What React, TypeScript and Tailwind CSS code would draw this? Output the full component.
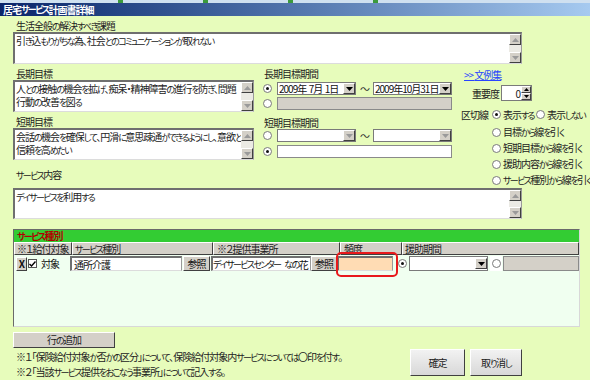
import React from "react";

const jp =
  "font-['Noto_Sans_CJK_JP','Noto_Sans_CJK_SC',sans-serif] [font-feature-settings:'palt'] tracking-[-1px]";

const raised =
  "border border-t-white border-l-white border-b-[#404040] border-r-[#404040] bg-[#d4d0c8]";
const sunken =
  "border-t-2 border-l-2 border-r border-b border-t-[#6f6f6f] border-l-[#6f6f6f] border-r-[#9a9a9a] border-b-[#dcdcdc]";

// kana in the old UI font are smaller and narrower than kanji
function T({ s }: { s: string }) {
  const parts = s.match(/[\u3041-\u30fa\u30fc]+|[^\u3041-\u30fa\u30fc]+/g) ?? [];
  return (
    <>
      {parts.map((p, i) =>
        /[\u3041-\u30fa\u30fc]/.test(p) ? (
          <span key={i} className="text-[9px] tracking-[-1.6px]">
            {p}
          </span>
        ) : (
          <span key={i}>{p}</span>
        )
      )}
    </>
  );
}

function Radio({ on = false }: { on?: boolean }) {
  return (
    <span className="flex h-[9px] w-[9px] shrink-0 items-center justify-center rounded-full border border-[#7a7a7a] bg-white">
      {on && <span className="h-[3px] w-[3px] rounded-full bg-[#111]" />}
    </span>
  );
}

function Arrow({ up = false, dim = false }: { up?: boolean; dim?: boolean }) {
  return (
    <svg width="7" height="4" viewBox="0 0 7 4">
      <path d={up ? "M0 4 L3.5 0 L7 4 Z" : "M0 0 L7 0 L3.5 4 Z"} fill={dim ? "#9a9a9a" : "#000"} />
    </svg>
  );
}

function ScrollBar() {
  return (
    <div className="flex w-[12px] shrink-0 flex-col bg-[#ebeae4]">
      <div className={`flex h-[11px] items-center justify-center ${raised}`}>
        <Arrow up dim />
      </div>
      <div className="flex-1" />
      <div className={`flex h-[11px] items-center justify-center ${raised}`}>
        <Arrow dim />
      </div>
    </div>
  );
}

function TextBox({ className, lines }: { className: string; lines: string[] }) {
  return (
    <div className={`flex bg-white ${sunken} ${className}`}>
      <div className="flex-1 overflow-hidden whitespace-nowrap pl-[1px] pt-[1px] text-[10px] leading-[12px] text-[#222]">
        {lines.map((l) => (
          <div key={l}>
            <T s={l} />
          </div>
        ))}
      </div>
      <ScrollBar />
    </div>
  );
}

function Combo({ text = "", className, dim = false }: { text?: string; className: string; dim?: boolean }) {
  return (
    <div className={`flex h-[13px] items-center border border-[#7a7a7a] bg-white ${className}`}>
      <span className="flex-1 overflow-hidden whitespace-pre pl-[1px] text-[10px] leading-[11px] text-[#111]">
        <T s={text} />
      </span>
      <span className={`flex h-[11px] w-[12px] shrink-0 items-center justify-center ${raised}`}>
        <Arrow dim={dim} />
      </span>
    </div>
  );
}

function Label({ s, className = "" }: { s: string; className?: string }) {
  return (
    <div className={`h-[12px] text-[10px] leading-[12px] text-[#222] ${className}`}>
      <T s={s} />
    </div>
  );
}

export default function App() {
  return (
    <div className={`flex h-[380px] w-[590px] flex-col overflow-hidden bg-[#dbe8f5] ${jp}`}>
      {/* other window peeking at top */}
      <div className="flex h-[3px] gap-[80px] bg-[#cfe0f0] pl-[118px]">
        <span className="w-[5px] bg-[#3c9a3c]" />
        <span className="w-[5px] bg-[#3c9a3c]" />
        <span className="w-[5px] bg-[#3c9a3c]" />
        <span className="w-[5px] bg-[#3c9a3c]" />
      </div>

      {/* title bar */}
      <div className="flex h-[13px] items-center bg-gradient-to-r from-[#0a246a] to-[#a6caf0] pl-[3px] text-[10px] font-bold leading-[13px] text-white">
        <T s="居宅サービス計画書詳細" />
      </div>

      {/* body */}
      <div className="flex flex-1 flex-col bg-[#e7fcbb] pl-[13px]">
        <Label className="mt-[4px] pl-[3px]" s="生活全般の解決すべき課題" />
        <TextBox className="h-[32px] w-[509px]" lines={["引き込もりがちな為、社会とのコミュニケーションが取れない"]} />

        <div className="mt-[3px] flex">
          {/* left column */}
          <div className="flex w-[241px] flex-col">
            <Label className="h-[13px] pl-[3px] leading-[13px]" s="長期目標" />
            <TextBox
              className="h-[32px] w-[241px]"
              lines={["人との接触の機会を拡げ、痴呆・精神障害の進行を防ぎ、問題", "行動の改善を図る"]}
            />
            <Label className="mt-[4px] pl-[3px]" s="短期目標" />
            <TextBox
              className="h-[32px] w-[241px]"
              lines={["会話の機会を確保して、円滑に意思疎通ができるようにし、意欲と", "信頼を高めたい"]}
            />
            <Label className="mt-[9px] pl-[3px]" s="サービス内容" />
          </div>

          {/* period column */}
          <div className="ml-[9px] flex w-[190px] flex-col">
            <Label className="h-[13px] pl-[1px] leading-[13px]" s="長期目標期間" />
            <div className="mt-[2px] flex h-[13px] items-center">
              <Radio on />
              <Combo className="ml-[5px] w-[79px]" text="2009年  7月  1日" />
              <span className="w-[17px] text-center text-[10px] text-[#333]">～</span>
              <Combo className="w-[79px]" text="2009年10月31日" />
            </div>
            <div className="mt-[2px] flex h-[13px] items-center">
              <Radio />
              <div className="ml-[5px] h-[13px] w-[175px] border border-[#8a8a8a] bg-[#d4d0c8]" />
            </div>
            <Label className="mt-[6px] h-[13px] pl-[1px] leading-[13px]" s="短期目標期間" />
            <div className="flex h-[13px] items-center">
              <Radio />
              <Combo className="ml-[5px] w-[79px]" dim />
              <span className="w-[17px] text-center text-[10px] text-[#333]">～</span>
              <Combo className="w-[79px]" dim />
            </div>
            <div className="mt-[3px] flex h-[13px] items-center">
              <Radio on />
              <div className="ml-[5px] h-[13px] w-[175px] border border-[#8a8a8a] bg-white" />
            </div>
          </div>

          {/* options column */}
          <div className="ml-[9px] flex flex-col text-[10px] text-[#222]">
            <div className="mt-[2px] h-[12px] pl-[3px] leading-[12px] text-[#2a45ff] underline">
              &gt;&gt; <T s="文例集" />
            </div>
            <div className="mt-[4px] flex h-[16px] items-center pl-[11px]">
              <span className="w-[29px]">重要度</span>
              <div className="flex h-[16px] w-[31px] items-center border border-[#7a7a7a] bg-white">
                <span className="flex-1 pr-[1px] text-right leading-[11px]">0</span>
                <div className="flex flex-col">
                  <span className={`flex h-[7px] w-[10px] items-center justify-center ${raised}`}>
                    <svg width="5" height="3" viewBox="0 0 5 3"><path d="M0 3 L2.5 0 L5 3 Z" fill="#000" /></svg>
                  </span>
                  <span className={`flex h-[7px] w-[10px] items-center justify-center ${raised}`}>
                    <svg width="5" height="3" viewBox="0 0 5 3"><path d="M0 0 L5 0 L2.5 3 Z" fill="#000" /></svg>
                  </span>
                </div>
              </div>
            </div>
            <div className="mt-[7px] flex h-[13px] items-center whitespace-nowrap">
              <span className="w-[31px]">区切線</span>
              <Radio on />
              <span className="ml-[2px] w-[33px]"><T s="表示する" /></span>
              <Radio />
              <span className="ml-[2px]"><T s="表示しない" /></span>
            </div>
            {["目標から線を引く", "短期目標から線を引く", "援助内容から線を引く", "サービス種別から線を引く"].map((t, i) => (
              <div key={t} className={`flex h-[16px] items-center whitespace-nowrap pl-[31px] ${i === 0 ? "mt-[3px]" : ""}`}>
                <Radio />
                <span className="ml-[2px]"><T s={t} /></span>
              </div>
            ))}
          </div>
        </div>

        <TextBox className="h-[31px] w-[509px]" lines={["デイサービスを利用する"]} />

        {/* service type frame */}
        <div className="relative mt-[10px] flex h-[98px] w-[567px] flex-col border border-[#6a6a6a] border-r-[#d8d8d8] border-b-[#d8d8d8] bg-[#f0fff0]">
          <div className="h-[12px] bg-[#33cc33] pl-[3px] text-[10px] font-bold leading-[12px] text-[#b00000]">
            <T s="サービス種別" />
          </div>
          <div className="flex h-[13px] bg-[#d4d0c8] text-[10px] leading-[11px] text-[#222]">
            <div className={`w-[58px] pl-[2px] ${raised}`}><T s="※１給付対象" /></div>
            <div className={`w-[141px] pl-[2px] ${raised}`}><T s="サービス種別" /></div>
            <div className={`w-[127px] pl-[3px] ${raised}`}><T s="※２提供事業所" /></div>
            <div className={`w-[62px] pl-[3px] ${raised}`}>頻度</div>
            <div className={`flex-1 pl-[2px] ${raised}`}>援助期間</div>
          </div>
          <div className="mt-[1px] flex h-[15px] items-center text-[10px] leading-[11px] text-[#111]">
            <span className={`ml-[2px] flex h-[14px] w-[11px] items-center justify-center font-bold ${raised}`}>X</span>
            <span className="ml-[1px] flex h-[9px] w-[9px] items-center justify-center border border-[#555] bg-white">
              <svg width="7" height="6" viewBox="0 0 7 6"><path d="M0.5 3 L2.5 5 L6.5 0.5" stroke="#000" strokeWidth="1.4" fill="none" /></svg>
            </span>
            <span className="ml-[4px] w-[29px]">対象</span>
            <span className={`flex h-[15px] w-[112px] items-center bg-white pl-[2px] ${sunken}`}>通所介護</span>
            <span className={`ml-[1px] flex h-[15px] w-[27px] items-center justify-center ${raised}`}>参照</span>
            <span className={`ml-[1px] flex h-[15px] w-[100px] items-center overflow-hidden whitespace-pre bg-white ${sunken}`}>
              <T s={"デイサービスセンター\u2002なの花"} />
            </span>
            <span className={`flex h-[15px] w-[26px] items-center justify-center ${raised}`}>参照</span>
            <span className={`flex h-[15px] w-[56px] bg-[#ffdcb4] ${sunken}`} />
            <span className="ml-[5px]"><Radio on /></span>
            <Combo className="ml-[2px] h-[15px] w-[79px]" />
            <span className="ml-[2px] flex h-[15px] w-[12px] items-center justify-center bg-white"><Radio /></span>
            <span className="ml-[1px] h-[15px] w-[76px] border border-[#8a8a8a] bg-[#d4d0c8]" />
          </div>
          {/* red highlight annotation */}
          <div className="absolute left-[322px] top-[22px] h-[25px] w-[62px] rounded-[5px] border-2 border-[#e8191c]" />
        </div>

        <button className={`mt-[5px] h-[16px] w-[102px] text-[10px] leading-[12px] text-[#222] ${raised}`}>
          <T s="行の追加" />
        </button>

        <div className="flex">
          <div className="w-[397px] whitespace-nowrap pl-[3px] pt-[2px] text-[10px] leading-[14px] text-[#222]">
            <div><T s="※１「保険給付対象か否かの区分」について、保険給付対象内サービスについては〇印を付す。" /></div>
            <div><T s="※２「当該サービス提供をおこなう事業所」について記入する。" /></div>
          </div>
          <button className="mt-[1px] h-[27px] w-[55px] border border-t-white border-l-white border-b-[#404040] border-r-[#404040] bg-gradient-to-b from-[#f2f2f2] to-[#d8d8d8] text-[10px] text-[#222]">
            確定
          </button>
          <button className="ml-[5px] mt-[1px] h-[27px] w-[52px] border border-t-white border-l-white border-b-[#404040] border-r-[#404040] bg-gradient-to-b from-[#f2f2f2] to-[#d8d8d8] text-[10px] text-[#222]">
            <T s="取り消し" />
          </button>
        </div>
      </div>
    </div>
  );
}
